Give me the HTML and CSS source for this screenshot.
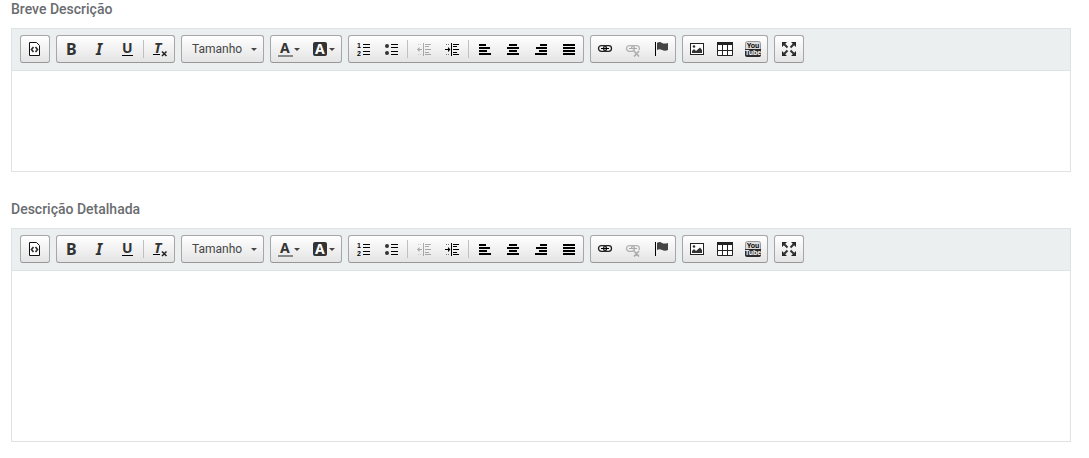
FILE: index.html
```html
<!DOCTYPE html>
<html lang="pt-BR">
<head>
    <meta charset="UTF-8">
    <meta name="viewport" content="width=device-width, initial-scale=1.0">
    <title>Descrição</title>
    <link rel="stylesheet" href="styles.css">
</head>
<body>
    <form class="form">
        <div class="field">
            <label class="label" for="breve">Breve Descrição</label>
            <div class="editor">
                <textarea class="content" id="breve"></textarea>
            </div>
        </div>
        <div class="field">
            <label class="label" for="detalhada">Descrição Detalhada</label>
            <div class="editor">
                <textarea class="content content-large" id="detalhada"></textarea>
            </div>
        </div>
    </form>

    <!-- Shared by both editors -->
    <template id="toolbar">
        <div class="toolbar" role="toolbar">
            <div class="group">
                <button type="button" class="button" title="Código-Fonte">
                    <svg class="icon" viewBox="0 0 16 16"><path d="M2.500 1.500H9.500L12.500 4.500V14.500H2.500Z" fill="#fff" stroke="#111"/><path d="M6.500 6L4.500 8.500L6.500 11M8.500 6L10.500 8.500L8.500 11" fill="none" stroke="#333" stroke-width="1.700"/></svg>
                </button>
            </div>
            <div class="group">
                <button type="button" class="button" title="Negrito">
                    <svg class="icon" viewBox="0 0 16 16"><text class="glyph" x="3" y="14">B</text></svg>
                </button>
                <button type="button" class="button" title="Itálico">
                    <svg class="icon" viewBox="0 0 16 16"><text class="glyph italic" x="5" y="14">I</text></svg>
                </button>
                <button type="button" class="button" title="Sublinhado">
                    <svg class="icon" viewBox="0 0 16 16"><text class="glyph small" x="3" y="12">U</text><path d="M3 14H14V15H3Z"/></svg>
                </button>
                <span class="separator"></span>
                <button type="button" class="button" title="Remover Formatação">
                    <svg class="icon" viewBox="0 0 16 16"><text class="glyph small italic" x="2" y="12">T</text><path d="M1 13H8V14H1Z"/><path d="M10 10.500L14.500 15M14.500 10.500L10 15" stroke="#222" stroke-width="1.500"/></svg>
                </button>
            </div>
            <div class="group combo">
                <select class="select" aria-label="Tamanho">
                    <option>Tamanho</option>
                </select>
                <span class="arrow"></span>
            </div>
            <div class="group">
                <button type="button" class="button" title="Cor do Texto">
                    <svg class="icon" viewBox="0 0 16 16"><text class="glyph small" x="3" y="12">A</text><path d="M1 14H16V16H1Z" fill="#888"/></svg>
                    <span class="arrow"></span>
                </button>
                <button type="button" class="button" title="Cor do Plano de Fundo">
                    <svg class="icon" viewBox="0 0 16 16"><rect x="1" y="1" width="14" height="14" rx="2" fill="#333"/><text class="glyph small light" x="3" y="13">A</text></svg>
                    <span class="arrow"></span>
                </button>
            </div>
            <div class="group">
                <button type="button" class="button" title="Lista numerada">
                    <svg class="icon" viewBox="0 0 16 16"><text class="digit" x="2" y="7">1</text><text class="digit" x="2" y="15">2</text><path d="M8 3H15V4H8ZM8 6H15V7H8ZM8 10H15V11H8ZM8 13H15V14H8Z"/></svg>
                </button>
                <button type="button" class="button" title="Lista sem números">
                    <svg class="icon" viewBox="0 0 16 16"><circle cx="4" cy="5" r="2" fill="#333"/><circle cx="4" cy="12" r="2" fill="#333"/><path d="M8 3H15V4H8ZM8 6H15V7H8ZM8 10H15V11H8ZM8 13H15V14H8Z"/></svg>
                </button>
                <span class="separator"></span>
                <button type="button" class="button" title="Diminuir Recuo" disabled>
                    <svg class="icon" viewBox="0 0 16 16"><path d="M7 2H8V15H7ZM9 3H15V4H9ZM9 5H13V6H9ZM9 8H15V9H9ZM9 11H13V12H9ZM9 13H15V14H9Z"/><path d="M2 3H3V4H2ZM4 3H5V4H4ZM2 13H3V14H2ZM4 13H5V14H4Z" fill="#666"/><path d="M1 8.500L3.500 6V8H6V9H3.500V11Z"/></svg>
                </button>
                <button type="button" class="button" title="Aumentar Recuo">
                    <svg class="icon" viewBox="0 0 16 16"><path d="M7 2H8V15H7ZM9 3H15V4H9ZM9 5H13V6H9ZM9 8H15V9H9ZM9 11H13V12H9ZM9 13H15V14H9Z"/><path d="M2 3H3V4H2ZM4 3H5V4H4ZM2 13H3V14H2ZM4 13H5V14H4Z" fill="#777"/><path d="M6.500 8.500L4 6V8H1V9H4V11Z"/></svg>
                </button>
                <span class="separator"></span>
                <button type="button" class="button" title="Alinhar Esquerda">
                    <svg class="icon" viewBox="0 0 16 16"><path d="M2 3H9V5H2ZM2 6H13V8H2ZM2 9H10V11H2ZM2 12H14V14H2Z"/></svg>
                </button>
                <button type="button" class="button" title="Centralizar">
                    <svg class="icon" viewBox="0 0 16 16"><path d="M4 3H12V5H4ZM2 6H14V8H2ZM4 9H12V11H4ZM2 12H14V14H2Z"/></svg>
                </button>
                <button type="button" class="button" title="Alinhar Direita">
                    <svg class="icon" viewBox="0 0 16 16"><path d="M7 3H14V5H7ZM3 6H14V8H3ZM6 9H14V11H6ZM2 12H14V14H2Z"/></svg>
                </button>
                <button type="button" class="button" title="Justificado">
                    <svg class="icon" viewBox="0 0 16 16"><path d="M2 3H14V5H2ZM2 6H14V8H2ZM2 9H14V11H2ZM2 12H14V14H2Z"/></svg>
                </button>
            </div>
            <div class="group">
                <button type="button" class="button" title="Inserir Link">
                    <svg class="icon" viewBox="0 0 16 16"><g fill="none" stroke="#222" stroke-width="1.300"><rect x="1.500" y="4.700" width="8" height="5.600" rx="2.800"/><rect x="6.500" y="4.700" width="8" height="5.600" rx="2.800"/></g><path d="M4 7H12V8H4Z"/></svg>
                </button>
                <button type="button" class="button" title="Remover Link" disabled>
                    <svg class="icon" viewBox="0 0 16 16"><g fill="none" stroke="#222" stroke-width="1.300"><rect x="1.500" y="4.700" width="8" height="5.600" rx="2.800"/><path d="M9 4.700H12A2.800 2.800 0 0 1 14 9M6.500 7.500A2.800 2.800 0 0 1 9 4.700"/><path d="M9 10L14 15.500M14 10L9 15.500" stroke-width="1.800"/></g><path d="M4 7H12V8H4Z"/></svg>
                </button>
                <button type="button" class="button" title="Inserir Âncora">
                    <svg class="icon" viewBox="0 0 16 16"><path d="M2 1H3V15H2Z"/><path d="M4 2C6 .500 8 1 9 2C11 3 13 2.500 15 2V9C13 10 11 10 9 9C7 8 6 8 4 9Z" fill="#444"/></svg>
                </button>
            </div>
            <div class="group">
                <button type="button" class="button" title="Imagem">
                    <svg class="icon" viewBox="0 0 16 16"><rect x="1.500" y="2.500" width="13" height="11" fill="#fff" stroke="#222"/><circle cx="5" cy="5.500" r="1.300" fill="#333"/><path d="M3 12V10L5 8L7 10L11 6.500L13 9V12Z" fill="#333"/></svg>
                </button>
                <button type="button" class="button" title="Tabela">
                    <svg class="icon" viewBox="0 0 16 16"><path d="M.500 2V14.500H15.500V2M.500 9.500H15.500M5.500 4V14M10.500 4V14" fill="#fff" stroke="#222"/><path d="M0 1H16V4H0Z" fill="#222"/></svg>
                </button>
                <button type="button" class="button" title="YouTube">
                    <svg class="icon" viewBox="0 0 16 16"><rect x=".500" y=".500" width="15" height="15" rx="2" fill="#ddd" stroke="#999"/><path d="M0 8H16V14Q16 16 14 16H2Q0 16 0 14Z" fill="#2b2b2b"/><text class="brand" x="8" y="7">You</text><text class="brand light" x="8" y="14">Tube</text></svg>
                </button>
            </div>
            <div class="group">
                <button type="button" class="button" title="Maximizar">
                    <svg class="icon" viewBox="0 0 16 16"><path d="M1 1H6L1 6ZM15 1H10L15 6ZM1 15H6L1 10ZM15 15H10L15 10Z" fill="#222"/><path d="M2 2L6.500 6.500M14 2L9.500 6.500M2 14L6.500 9.500M14 14L9.500 9.500" stroke="#333" stroke-width="2"/></svg>
                </button>
            </div>
        </div>
    </template>

    <script>
        const toolbar = document.getElementById('toolbar');

        document.querySelectorAll('.editor').forEach(editor => {
            editor.prepend(toolbar.content.cloneNode(true));
        });
    </script>
</body>
</html>
```
FILE: styles.css
```css
* {
    box-sizing: border-box;
}
body {
    margin: 0;
    background-color: #fff;
    font-family: Roboto, Arial, sans-serif;
}
.form {
    padding: 0 18px 0 11px;
}
.field {
    margin-bottom: 28px;
}
.field:last-child {
    margin-bottom: 0;
}
.label {
    display: block;
    margin-bottom: 10px;
    font-size: 14px;
    font-weight: 500;
    line-height: 18px;
    color: #6a6c6f;
}
.editor {
    border: 1px solid #dfe3e3;
}
.toolbar {
    display: flex;
    flex-wrap: wrap;
    gap: 6px;
    padding: 6px 8px 7px;
    background-color: #ebeff0;
    border-bottom: 1px solid #dfe3e3;
}
.group {
    display: flex;
    align-items: center;
    height: 28px;
    border: 1px solid #a6a6a6;
    border-bottom-color: #979797;
    border-radius: 3px;
    background: linear-gradient(#fff, #e4e4e4);
}
.button {
    display: flex;
    align-items: center;
    gap: 1px;
    padding: 5px 6px;
    border: none;
    background: none;
    cursor: pointer;
}
.button:hover {
    background-color: #ccc;
}
.button:disabled {
    opacity: 0.3;
    cursor: default;
}
.icon {
    display: block;
    width: 16px;
    height: 16px;
    overflow: visible;
}
.separator {
    width: 1px;
    height: 18px;
    margin: 0 2px;
    background-color: #c0c0c0;
}
.arrow {
    border: 3px solid transparent;
    border-top-color: #444;
    border-bottom: none;
}
.combo {
    display: grid;
    align-items: center;
}
.combo .select,
.combo .arrow {
    grid-area: 1 / 1;
}
.combo .arrow {
    justify-self: end;
    margin-right: 6px;
    pointer-events: none;
}
.select {
    appearance: none;
    width: 81px;
    height: 26px;
    padding: 0 10px;
    border: none;
    background: none;
    font-family: inherit;
    font-size: 12px;
    color: #474747;
}
.glyph {
    font-family: "Noto Sans", sans-serif;
    font-size: 16px;
    font-weight: bold;
    fill: #333;
}
.small {
    font-size: 14px;
}
.italic {
    font-style: italic;
}
.digit {
    font-family: "Liberation Sans", sans-serif;
    font-size: 7px;
    font-weight: bold;
}
.brand {
    font-family: "Liberation Sans Narrow", "Liberation Sans", sans-serif;
    font-size: 7px;
    font-weight: bold;
    text-anchor: middle;
}
.light {
    fill: #fff;
}
.content {
    display: block;
    width: 100%;
    height: 100px;
    padding: 10px;
    border: none;
    outline: none;
    resize: none;
    font-family: inherit;
    font-size: 14px;
}
.content-large {
    height: 170px;
}
```
